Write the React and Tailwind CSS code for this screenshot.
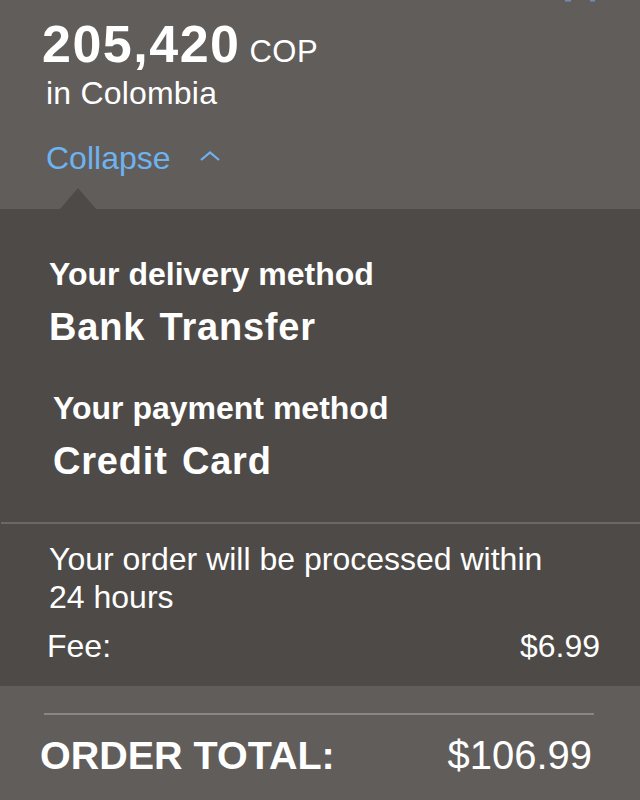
import React from "react";

export default function App() {
  return (
    <div
      className="w-[640px] h-[800px] overflow-hidden bg-[#615d5a] text-white"
      style={{ fontFamily: '"Liberation Sans", Arial, sans-serif' }}
    >
      {/* Top summary */}
      <div className="relative flex flex-col pt-[18px] pl-[46px]">
        <svg
          className="absolute top-0 left-[560px]"
          width="40"
          height="4"
          viewBox="0 0 40 4"
        >
          <rect x="5" y="0" width="6" height="1.5" fill="#6d8fb5" />
          <rect x="30" y="0" width="5" height="1.5" fill="#6d8fb5" />
        </svg>
        <div className="-ml-[4px] h-[52px] text-[52px] leading-[52px] font-bold whitespace-nowrap tracking-[1.5px]">
          205,420
          <span className="ml-[9px] text-[31px] leading-none font-normal tracking-[0.5px]">COP</span>
        </div>
        <div className="text-[32px] leading-[46px] tracking-[0.2px]">in Colombia</div>
        <div className="mt-[22px] flex items-center text-[32px] leading-[40px] text-[#6fb2f0]">
          <span>Collapse</span>
          <svg
            className="ml-[29px] mt-[-4px]"
            width="20"
            height="12"
            viewBox="0 0 20 12"
            fill="none"
            stroke="#6fb2f0"
            strokeWidth="2.2"
          >
            <polyline points="1,10 10,2.5 19,10" />
          </svg>
        </div>
        <div className="mt-[10px] ml-[14px] w-0 h-0 border-l-[18px] border-r-[18px] border-b-[21px] border-l-transparent border-r-transparent border-b-[#4e4a47]" />
      </div>

      {/* Details panel */}
      <div className="bg-[#4e4a47] h-[477px] flex flex-col">
        <div className="pt-[45px] pl-[49px] flex flex-col">
          <div className="text-[32px] leading-[40px] font-bold">Your delivery method</div>
          <div className="mt-[10px] text-[38px] leading-[46px] font-bold [word-spacing:3px] tracking-[0.8px]">
            Bank Transfer
          </div>
        </div>
        <div className="mt-[38px] pl-[53px] flex flex-col">
          <div className="text-[32px] leading-[40px] font-bold">Your payment method</div>
          <div className="mt-[10px] text-[38px] leading-[46px] font-bold [word-spacing:3px] tracking-[0.8px]">
            Credit Card
          </div>
        </div>
        <div className="mt-[38px] ml-px h-[2px] bg-[#6c6865]" />
        <div className="pl-[47px] pr-[40px] flex flex-col">
          <div className="mt-[16px] ml-[2px] max-w-[500px] text-[32px] leading-[38px]">
            Your order will be processed within 24 hours
          </div>
          <div className="mt-[11px] flex justify-between text-[32px] leading-[38px]">
            <span>Fee:</span>
            <span>$6.99</span>
          </div>
        </div>
      </div>

      {/* Total */}
      <div className="flex flex-col">
        <div className="mt-[27px] ml-[44px] mr-[46px] h-[2px] bg-[#8a8683]" />
        <div className="mt-[16px] pl-[40px] pr-[48px] flex justify-between items-start">
          <span className="text-[39.5px] leading-[48px] font-bold">ORDER TOTAL:</span>
          <span className="text-[40px] leading-[48px]">$106.99</span>
        </div>
      </div>
    </div>
  );
}
